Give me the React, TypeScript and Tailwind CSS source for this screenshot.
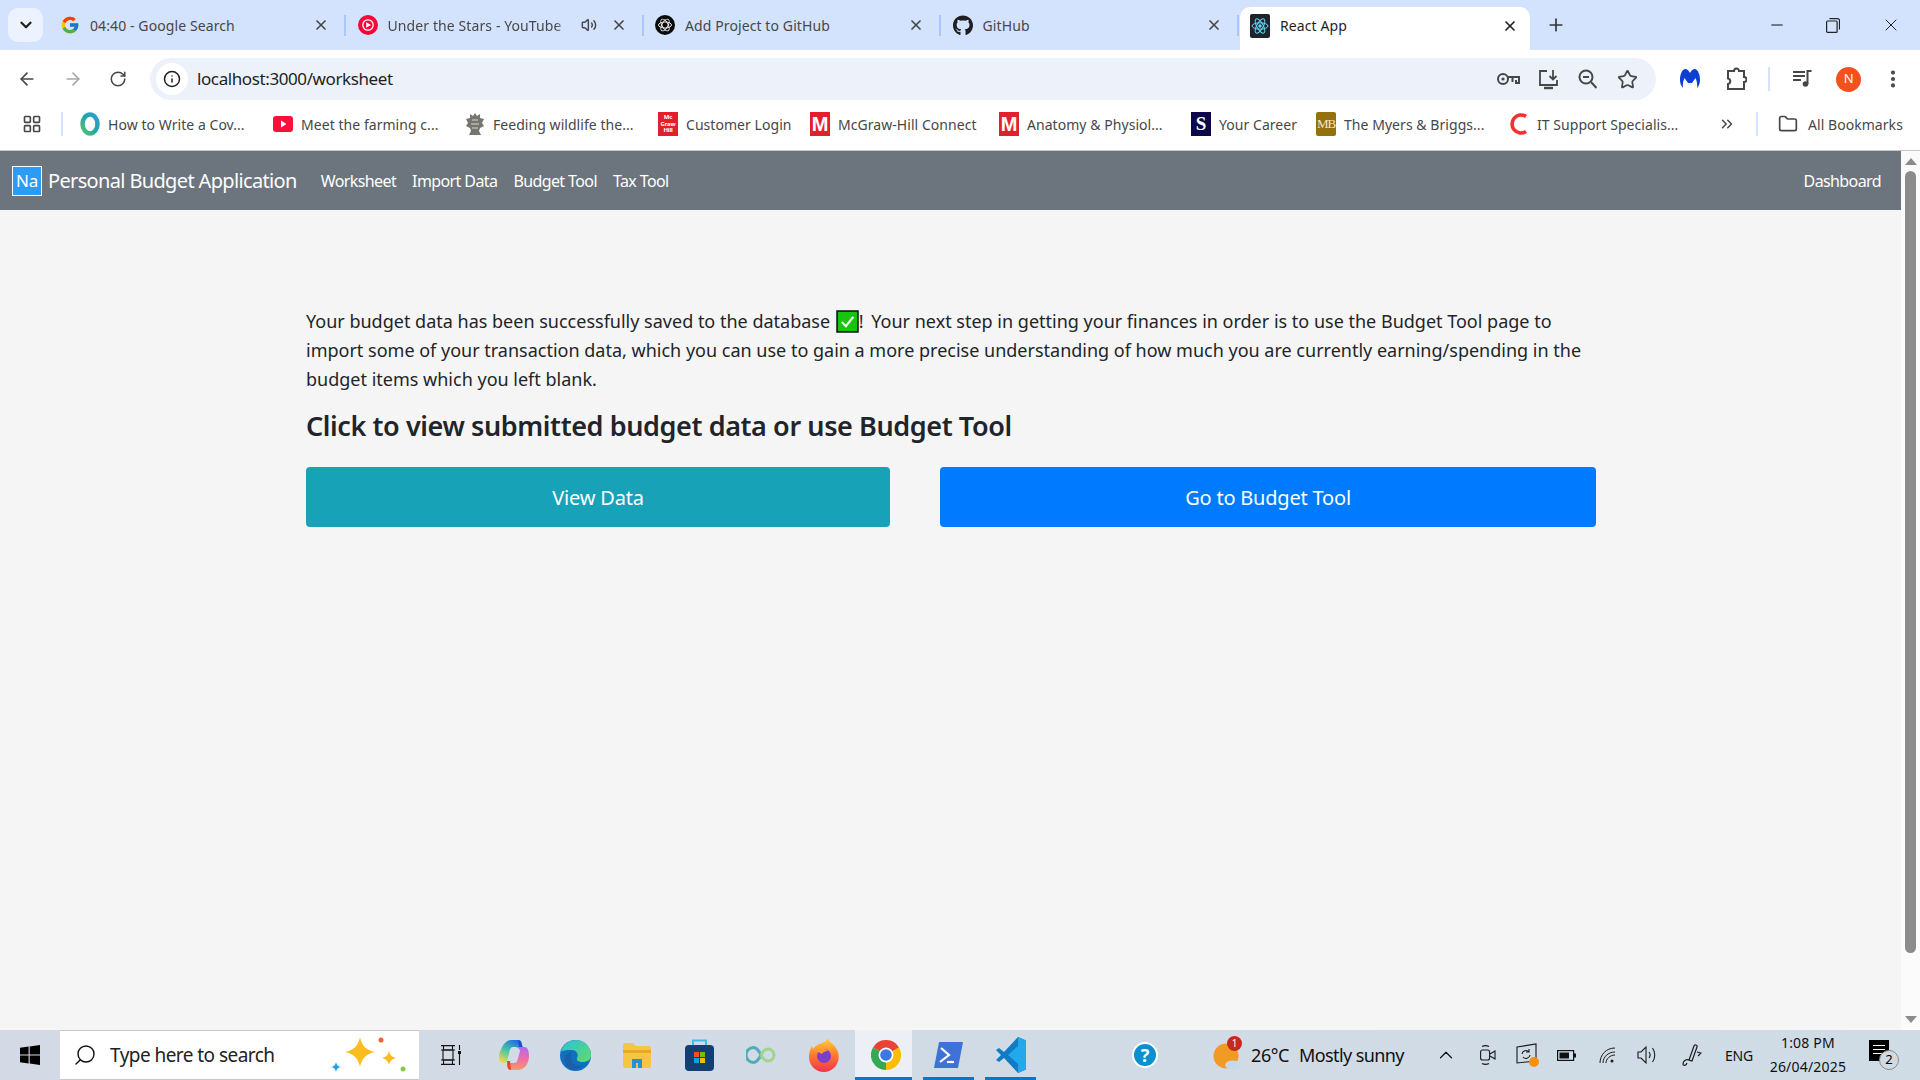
import {
  ArrowLeft,
  ArrowRight,
  ChevronDown,
  ChevronUp,
  ChevronsRight,
  EllipsisVertical,
  Folder,
  Info,
  LayoutGrid,
  Minus,
  Plus,
  RotateCw,
  Search,
  Star,
  Volume2,
  X,
} from "lucide-react";
import type { ReactNode } from "react";
import { FaGithub } from "react-icons/fa";
import { FcGoogle } from "react-icons/fc";

const YtMusicIcon = () => (
  <svg width="20" height="20" viewBox="0 0 20 20">
    <circle cx="10" cy="10" r="10" fill="#f5073a" />
    <circle cx="10" cy="10" r="5.2" fill="none" stroke="#fff" strokeWidth="1.3" />
    <path d="M8.2 7.3 13 10l-4.8 2.7z" fill="#fff" />
  </svg>
);

const GptIcon = () => (
  <svg width="20" height="20" viewBox="0 0 20 20">
    <circle cx="10" cy="10" r="10" fill="#0a0a0a" />
    <g fill="none" stroke="#e8e8e8" strokeWidth="1">
      <ellipse cx="10" cy="10" rx="6.5" ry="3" />
      <ellipse cx="10" cy="10" rx="6.5" ry="3" transform="rotate(60 10 10)" />
      <ellipse cx="10" cy="10" rx="6.5" ry="3" transform="rotate(120 10 10)" />
    </g>
  </svg>
);

const ReactFavicon = () => (
  <svg width="20" height="24" viewBox="0 0 20 24">
    <rect width="20" height="24" rx="2" fill="#20232a" />
    <g fill="none" stroke="#61dafb" strokeWidth="1">
      <ellipse cx="10" cy="12" rx="8" ry="3.2" />
      <ellipse cx="10" cy="12" rx="8" ry="3.2" transform="rotate(60 10 12)" />
      <ellipse cx="10" cy="12" rx="8" ry="3.2" transform="rotate(120 10 12)" />
    </g>
    <circle cx="10" cy="12" r="1.7" fill="#61dafb" />
  </svg>
);

const RingIcon = () => (
  <svg width="20" height="24" viewBox="0 0 20 24">
    <defs>
      <linearGradient id="ring" x1="0" y1="1" x2="1" y2="0">
        <stop offset="0" stopColor="#57c26f" />
        <stop offset="0.5" stopColor="#1fa6a8" />
        <stop offset="1" stopColor="#2f9fd0" />
      </linearGradient>
    </defs>
    <ellipse cx="10" cy="12" rx="7.5" ry="9.5" fill="none" stroke="url(#ring)" strokeWidth="4.5" />
  </svg>
);

const YtIcon = () => (
  <svg width="20" height="16" viewBox="0 0 20 16">
    <rect width="20" height="16" rx="3" fill="#fb0f3c" />
    <path d="M8 4.6 13.4 8 8 11.4z" fill="#fff" />
  </svg>
);

const CrestIcon = () => (
  <svg width="20" height="24" viewBox="0 0 20 24">
    <path d="M10 1l2 3 3-2v4l4 1-2 4 2 3-4 2-1 3 2 4H4l2-4-1-3-4-2 2-3-2-4 4-1V2l3 2z" fill="#77756f" />
    <path d="M7 8h6M6 12h8M7 16h6" stroke="#d8d8d8" strokeWidth="1" />
  </svg>
);

const McGrawIcon = () => (
  <div className="flex h-[24px] w-[20px] flex-col items-center justify-center bg-[#e2202c] text-[6px] font-bold leading-[6.5px] text-white">
    <span>Mc</span>
    <span>Graw</span>
    <span>Hill</span>
  </div>
);

const RedM = () => (
  <div className="flex h-[24px] w-[20px] items-center justify-center bg-[#e2202c] font-['Liberation_Sans',sans-serif] text-[20px] font-bold text-white">
    M
  </div>
);

const CareerIcon = () => (
  <div className="flex h-[24px] w-[20px] items-center justify-center bg-[#0c0748] font-['Liberation_Serif',serif] text-[19px] font-bold text-white">
    S
  </div>
);

const MbIcon = () => (
  <div className="flex h-[24px] w-[20px] items-center justify-center rounded-[2px] bg-[#94700f] font-['Liberation_Serif',serif] text-[13px] tracking-[-1px] text-[#f4e8c4]">
    MB
  </div>
);

const RedC = () => (
  <svg width="20" height="24" viewBox="0 0 20 24">
    <path d="M17 4.5A9 9 0 1 0 17 19.5" fill="none" stroke="#f23030" strokeWidth="3.6" />
  </svg>
);

const MalwareIcon = () => (
  <svg width="22" height="24" viewBox="0 0 22 24">
    <path
      d="M1 13C1 7 3 3 6 2c2-.6 4 2 5 4 1-2 3-4.6 5-4 3 1 5 5 5 11 0 3-1 6-3 8 .5-3 0-7-1.5-10L13 16h-4L5.5 11C4 14 3.500 18 4 21c-2-2-3-5-3-8z"
      fill="#0d3fd1"
    />
  </svg>
);

const KeyIcon = () => (
  <svg width="23" height="14" viewBox="0 0 23 14" fill="none" stroke="#474747" strokeWidth="2">
    <circle cx="6" cy="7" r="5" />
    <circle cx="6" cy="7" r="1.6" fill="#474747" stroke="none" />
    <path d="M11 5h11v6h-3V8M15.500 5v5" />
  </svg>
);

const InstallIcon = () => (
  <svg width="21" height="21" viewBox="0 0 21 21" fill="none" stroke="#474747" strokeWidth="1.800">
    <path d="M9 2H2v14h17V11" />
    <path d="M15 1v9M11.500 7l3.500 3.500L18.500 7" />
    <path d="M6 19h9" strokeWidth="2.400" />
  </svg>
);

const ZoomOutIcon = () => (
  <svg width="19" height="20" viewBox="0 0 19 20" fill="none" stroke="#474747" strokeWidth="2">
    <circle cx="8" cy="8" r="6.500" />
    <path d="M5 8h6M13 13l5.500 6" />
  </svg>
);

const PuzzleIcon = () => (
  <svg width="21" height="24" viewBox="0 0 21 24" fill="none" stroke="#474747" strokeWidth="2">
    <path d="M8 4a2.500 2.500 0 0 1 5 0h5v6a2.500 2.500 0 0 1 0 5v7H2v-5a2.800 2.800 0 0 0 0-5.500V4z" />
  </svg>
);

const MediaIcon = () => (
  <svg width="20" height="18" viewBox="0 0 20 18" fill="none" stroke="#474747" strokeWidth="1.800">
    <path d="M0 2h12M0 6h12M0 10h8" />
    <path d="M14.500 14V1h4" strokeWidth="2" />
    <circle cx="12.500" cy="14" r="2.800" fill="#474747" stroke="none" />
  </svg>
);

const RestoreIcon = () => (
  <svg width="14" height="15" viewBox="0 0 14 15" fill="none" stroke="#222" strokeWidth="1.200">
    <rect x=".6" y="3" width="10.500" height="11.400" rx="1" />
    <path d="M3.500 .6h8a2 2 0 0 1 2 2v9" />
  </svg>
);

const WinLogo = () => (
  <svg width="20" height="20" viewBox="0 0 20 20" fill="#000">
    <path d="M0 2.800 8.600 1.600v7.800H0zM9.700 1.400 20 0v9.400H9.700zM0 10.500h8.600v7.900L0 17.200zM9.700 10.500H20V20L9.700 18.600z" />
  </svg>
);

const Sparkles = () => (
  <svg width="76" height="36" viewBox="0 0 76 36">
    <path d="M29 0c2 9 6 13 15 15-9 2-13 6-15 15-2-9-6-13-15-15 9-2 13-6 15-15z" fill="#fbbc1e" />
    <path d="M58 14c1 4 3 6 7 7-4 1-6 3-7 7-1-4-3-6-7-7 4-1 6-3 7-7z" fill="#fbbc1e" />
    <circle cx="50" cy="3" r="2.500" fill="#ee6234" />
    <circle cx="72" cy="32" r="2.500" fill="#8cc84b" />
    <path d="M5 25c.6 3 2 4.400 5 5-3 .6-4.400 2-5 5-.6-3-2-4.400-5-5 3-.6 4.400-2 5-5z" fill="#1f9fe6" />
  </svg>
);

const TaskView = () => (
  <svg width="20" height="20" viewBox="0 0 20 20" fill="none" stroke="#111" strokeWidth="1.100">
    <path d="M0 .6h14M0 19.400h14M2.500 .6v4M11.500 .6v4M2.500 15.500v4M11.500 15.500v4" />
    <rect x="2" y="5" width="10" height="10" />
    <path d="M0 5h14M0 15h14" />
    <path d="M18.500 0v5M18.500 9v11" />
    <rect x="17" y="6" width="3" height="3" fill="#111" stroke="none" />
  </svg>
);

const CopilotIcon = () => (
  <svg width="30" height="30" viewBox="0 0 30 30">
    <defs>
      <linearGradient id="cpa" x1="0.700" y1="0" x2="0.200" y2="1">
        <stop offset="0" stopColor="#1f6fe0" />
        <stop offset="0.500" stopColor="#45c5a5" />
        <stop offset="1" stopColor="#f7d84a" />
      </linearGradient>
      <linearGradient id="cpb" x1="0.500" y1="0" x2="0.500" y2="1">
        <stop offset="0" stopColor="#b06be8" />
        <stop offset="0.500" stopColor="#ec6bb0" />
        <stop offset="1" stopColor="#f79a5c" />
      </linearGradient>
    </defs>
    <path d="M12 0h7c2 0 3 1 3.500 3l1 4H14c-2 0-3 2-3.500 4L8 21c-.5 1.500-1.500 2-3 2-3 0-5-2-5-5C0 10 6 0 12 0z" fill="url(#cpa)" />
    <path d="M15 7h11c2 0 4 3 4 9 0 8-5 14-11 14h-7c-2 0-3-1-3.500-3l-.5-4h7c2 0 3-1 3.500-3L21 11c-.3-2-2-4-6-4z" fill="url(#cpb)" />
    <path d="M19 0c2 0 3 1 3.500 3l1 4H20z" fill="#1c4fd0" />
    <path d="M8 21l3 0 1 9c-2 0-3-1-3.500-3z" fill="#e0452c" />
  </svg>
);

const EdgeIcon = () => (
  <svg width="31" height="31" viewBox="0 0 31 31">
    <defs>
      <linearGradient id="edgea" x1="0" y1="0" x2="1" y2="1">
        <stop offset="0" stopColor="#2cc0d8" />
        <stop offset="1" stopColor="#5fdc6a" />
      </linearGradient>
    </defs>
    <circle cx="15.500" cy="15.500" r="15.500" fill="#0f6fc0" />
    <path d="M1 12C3 4 9 0 16 0c8 0 15 6 15 15 0 5-4 7-8 7-5 0-7-2-6-4 2-3 0-8-5-8-3 0-9 0-11 2z" fill="url(#edgea)" />
    <path d="M11 18c0 5 5 9 11 8-3 3-6 4-9 4C8 29 4 24 5 18c1-4 4-6 7-6-1 2-1 4-1 6z" fill="#1a5fa8" />
  </svg>
);

const FolderApp = () => (
  <svg width="28" height="26" viewBox="0 0 28 26">
    <path d="M0 3a2 2 0 0 1 2-2h8l3 3h13a2 2 0 0 1 2 2v18a2 2 0 0 1-2 2H2a2 2 0 0 1-2-2z" fill="#f7c544" />
    <path d="M0 8h28v3H0z" fill="#e6a91f" />
    <path d="M9 26V17h10v9h-4v-5h-2v5z" fill="#2a8fd8" />
  </svg>
);

const StoreIcon = () => (
  <svg width="29" height="32" viewBox="0 0 29 32">
    <path d="M8 6V1.500h13V6" fill="none" stroke="#35c4e8" strokeWidth="2" />
    <rect y="6" width="29" height="26" rx="4" fill="#143f72" />
    <rect x="9" y="13" width="5" height="5" fill="#f25022" />
    <rect x="15" y="13" width="5" height="5" fill="#7fba00" />
    <rect x="9" y="19" width="5" height="5" fill="#00a4ef" />
    <rect x="15" y="19" width="5" height="5" fill="#ffb900" />
  </svg>
);

const InfinityIcon = () => (
  <svg width="30" height="18" viewBox="0 0 30 18" fill="none" strokeWidth="3">
    <path d="M15 9c-2-4-4-7.500-7.500-7.500a7.500 7.500 0 0 0 0 15C11 16.500 13 13 15 9" stroke="#52adb8" />
    <path d="M15 9c2-4 4-6 7-6a6 6 0 0 1 0 12c-3 0-5-2-7-6" stroke="#9ed68b" />
  </svg>
);

const FirefoxIcon = () => (
  <svg width="30" height="34" viewBox="0 0 30 34">
    <defs>
      <linearGradient id="ffa" x1="0.500" y1="0" x2="0.500" y2="1">
        <stop offset="0" stopColor="#ffd23a" />
        <stop offset="0.500" stopColor="#ff7a2e" />
        <stop offset="1" stopColor="#f0344f" />
      </linearGradient>
    </defs>
    <path d="M18 0c1 3 8 6 11 14 3 10-4 20-14 20C6 34 0 27 0 19c0-4 1-8 3-11l1 3c2-3 5-5 9-6 3-1 5-3 5-5z" fill="url(#ffa)" />
    <circle cx="15" cy="18" r="7" fill="#7b3fc9" />
    <path d="M7 13c4-3 9-3 12 0-3 0-5 1-6 3z" fill="#ff9a2e" />
  </svg>
);

const ChromeIcon = () => (
  <svg width="30" height="30" viewBox="0 0 30 30">
    <path d="M15 15 2 7.500A15 15 0 0 1 28 7.500z" fill="#ea4335" />
    <path d="M15 15 28 7.500A15 15 0 0 1 15 30z" fill="#fbbc05" />
    <path d="M15 15 15 30A15 15 0 0 1 2 7.500z" fill="#34a853" />
    <circle cx="15" cy="15" r="7.500" fill="#fff" />
    <circle cx="15" cy="15" r="5.800" fill="#3b78e7" />
  </svg>
);

const PowerShellIcon = () => (
  <svg width="29" height="26" viewBox="0 0 29 26">
    <path d="M5 0h24l-5 26H0z" fill="#3f72d8" />
    <path d="M7 6l8 7-9 7" fill="none" stroke="#fff" strokeWidth="2.200" />
    <path d="M13 20h7" stroke="#fff" strokeWidth="2.200" />
  </svg>
);

const VsCodeIcon = () => (
  <svg width="30" height="36" viewBox="0 0 30 36">
    <path d="M22 0l8 3.500v29L22 36 8 21 3 25 0 23l5-5-5-5 3-2 5 4z" fill="#0f7cc4" />
    <path d="M22 0l8 3.500v29L22 36zM22 9 12 18l10 9z" fill="#23a8ec" fillRule="evenodd" />
  </svg>
);

const HelpIcon = () => (
  <div className="flex h-[26px] w-[26px] items-center justify-center rounded-full border-[2px] border-white bg-[#0a8fd0] text-[18px] font-bold text-white">
    ?
  </div>
);

const WeatherIcon = () => (
  <div className="relative h-[30px] w-[28px]">
    <svg width="28" height="30" viewBox="0 0 28 30">
      <circle cx="13" cy="16" r="12.500" fill="#f29b24" />
      <ellipse cx="20" cy="25" rx="8" ry="4.500" fill="#c8d8ea" />
    </svg>
    <span className="absolute -top-[4px] right-[-1px] flex h-[15px] w-[15px] items-center justify-center rounded-full bg-[#c42b1c] text-[10px] text-white">
      1
    </span>
  </div>
);

const MeetIcon = () => (
  <svg width="16" height="22" viewBox="0 0 16 22" fill="none" stroke="#1a1a1a" strokeWidth="1.100">
    <rect x=".6" y="6" width="9" height="10" rx="2" />
    <path d="M10 10l5-3v8l-5-3M2 2.500c2-1 5-1 7 0M2 19.500c2 1 5 1 7 0" />
  </svg>
);

const SyncIcon = () => (
  <div className="relative h-[24px] w-[23px]">
    <svg width="21" height="21" viewBox="0 0 21 21" fill="none" stroke="#1a1a1a" strokeWidth="1.100">
      <path d="M1 4 20 1v17l-19 2zM6 11a4 4 0 0 1 7-2M13 6v3h-3M14 12a4 4 0 0 1-7 2" />
    </svg>
    <span className="absolute bottom-0 right-0 h-[10px] w-[10px] rounded-full bg-[#f7900a]" />
  </div>
);

const BatteryIcon = () => (
  <svg width="19" height="11" viewBox="0 0 19 11">
    <rect x=".6" y=".6" width="16" height="9.800" fill="none" stroke="#111" strokeWidth="1.200" />
    <rect x="2.500" y="2.500" width="9.500" height="6" fill="#111" />
    <rect x="17" y="3.500" width="2" height="4" fill="#111" />
  </svg>
);

const WifiIcon = () => (
  <svg width="17" height="17" viewBox="0 0 17 17" fill="none" stroke="#1a1a1a" strokeWidth="1">
    <path d="M1 16C1 8 7 1 16 1M4 16c0-6 5-11 12-11M7 16c0-4 4-8 9-8" />
    <circle cx="13" cy="14" r="1.500" fill="#1a1a1a" stroke="none" />
  </svg>
);

const SpeakerIcon = () => (
  <svg width="20" height="20" viewBox="0 0 20 20" fill="none" stroke="#1a1a1a" strokeWidth="1.100">
    <path d="M1 7h3l5-5v16l-5-5H1z" />
    <path d="M12 7c1.500 2 1.500 4 0 6M15.500 3c3 4 3 10 0 14" />
  </svg>
);

const PenIcon = () => (
  <svg width="20" height="24" viewBox="0 0 20 24" fill="none" stroke="#1a1a1a" strokeWidth="1.200">
    <path d="M12 3 7 17l3 1 5-14a1.500 1.500 0 0 0-3-1zM15 9l4 1-3 3M7 17c-3-1-6 1-6 4 0 2 3 2 4-1" />
  </svg>
);

const NotifIcon = () => (
  <div className="relative h-[30px] w-[30px]">
    <div className="flex h-[21px] w-[20px] flex-col gap-[3px] bg-black px-[4px] pt-[5px]">
      <div className="h-[1px] bg-white" />
      <div className="h-[1px] bg-white" />
      <div className="h-[1px] bg-white" />
    </div>
    <span className="absolute bottom-0 right-0 flex h-[20px] w-[20px] items-center justify-center rounded-full border border-[#8a8a8a] bg-[#d0dbe5] text-[13px] text-black">
      2
    </span>
  </div>
);

const TabStrip = ({
  icon,
  title,
  audio,
}: {
  icon: ReactNode;
  title: string;
  audio?: boolean;
}) => (
  <div className="flex h-[40px] w-[297.5px] shrink-0 items-center pl-[10px]">
    <div className="flex w-[20px] shrink-0 justify-center">{icon}</div>
    <span
      className={`ml-[10px] min-w-0 flex-1 overflow-hidden whitespace-nowrap text-[14px] tracking-[0.1px] text-[#474747] ${
        audio ? "[mask-image:linear-gradient(to_right,black_94%,transparent)]" : ""
      }`}
    >
      {title}
    </span>
    {audio && <Volume2 size={16} strokeWidth={2.200} className="mx-[14px] shrink-0 text-[#474747]" />}
    <X size={16} strokeWidth={2.500} className="shrink-0 text-[#474747]" />
    <div className="ml-[15px] mr-[1.500px] h-[21px] w-[2px] shrink-0 bg-[#a8c7fa]" />
  </div>
);

const bookmarks: { icon: ReactNode; label: string; width: string }[] = [
  { icon: <RingIcon />, label: "How to Write a Cov...", width: "w-[193px]" },
  { icon: <YtIcon />, label: "Meet the farming c...", width: "w-[192px]" },
  { icon: <CrestIcon />, label: "Feeding wildlife the...", width: "w-[193px]" },
  { icon: <McGrawIcon />, label: "Customer Login", width: "w-[152px]" },
  { icon: <RedM />, label: "McGraw-Hill Connect", width: "w-[189px]" },
  { icon: <RedM />, label: "Anatomy & Physiol...", width: "w-[192px]" },
  { icon: <CareerIcon />, label: "Your Career", width: "w-[125px]" },
  { icon: <MbIcon />, label: "The Myers & Briggs...", width: "w-[193px]" },
  { icon: <RedC />, label: "IT Support Specialis...", width: "w-[190px]" },
];

const BookmarkItem = ({ icon, label, width }: { icon: ReactNode; label: string; width: string }) => (
  <div className={`flex items-center ${width} shrink-0 gap-[8px]`}>
    <div className="flex w-[20px] shrink-0 justify-center">{icon}</div>
    <span className="whitespace-nowrap text-[14px] tracking-[0.05px] text-[#474747]">{label}</span>
  </div>
);

const TaskApp = ({ children, width }: { children: ReactNode; width: string }) => (
  <div className={`flex h-full items-center justify-center ${width} shrink-0`}>{children}</div>
);

export default function App() {
  return (
    <div className="flex h-[1080px] w-[1920px] flex-col overflow-hidden bg-white font-['Noto_Sans',sans-serif] tracking-[-0.2px]">
      {/* tab strip */}
      <div className="flex h-[50px] shrink-0 items-end bg-[#d3e3fd]">
        <div className="mb-[8px] ml-[8px] mr-[7px] flex h-[34px] w-[35px] shrink-0 items-center justify-center rounded-[10px] bg-[#edf3fe]">
          <ChevronDown size={18} strokeWidth={3} className="text-[#1f1f1f]" />
        </div>
        <div className="flex h-full items-center">
          <TabStrip icon={<FcGoogle size={20} />} title="04:40 - Google Search" />
          <TabStrip icon={<YtMusicIcon />} title="Under the Stars - YouTube Music" audio />
          <TabStrip icon={<GptIcon />} title="Add Project to GitHub" />
          <TabStrip icon={<FaGithub size={21} className="text-[#1f1f1f]" />} title="GitHub" />
        </div>
        <div className="flex h-[43px] w-[290px] shrink-0 items-center rounded-t-[10px] bg-white pb-[6px] pl-[10px] pr-[12px]">
          <ReactFavicon />
          <span className="ml-[10px] flex-1 text-[14px] tracking-[0.1px] text-[#1f1f1f]">React App</span>
          <X size={16} strokeWidth={2.500} className="text-[#1f1f1f]" />
        </div>
        <div className="flex h-full flex-1 items-center">
          <Plus size={20} strokeWidth={2} className="ml-[16px] text-[#333]" />
          <Minus size={18} strokeWidth={1.500} className="ml-[202px] text-[#111]" />
          <div className="ml-[40px]">
            <RestoreIcon />
          </div>
          <X size={20} strokeWidth={1.200} className="ml-[41px] text-[#222]" />
        </div>
      </div>

      {/* address bar */}
      <div className="flex h-[50px] shrink-0 items-start bg-white pt-[8px]">
        <div className="flex h-[42px] items-center pl-[17px]">
          <ArrowLeft size={20} strokeWidth={2} className="text-[#474747]" />
          <ArrowRight size={20} strokeWidth={2} className="ml-[26px] text-[#a8a8a8]" />
          <RotateCw size={18} strokeWidth={2} className="ml-[26px] text-[#474747]" />
        </div>
        <div className="ml-[23px] flex h-[42px] w-[1506px] shrink-0 items-center rounded-full bg-[#ecf1fa] pl-[6px]">
          <div className="flex h-[32px] w-[32px] items-center justify-center rounded-full bg-white">
            <Info size={18} strokeWidth={2} className="text-[#1f1f1f]" />
          </div>
          <span className="ml-[9px] flex-1 text-[17px] tracking-[-0.4px] text-[#1f1f1f]">localhost:3000/worksheet</span>
          <KeyIcon />
          <div className="ml-[18px]">
            <InstallIcon />
          </div>
          <div className="ml-[19px]">
            <ZoomOutIcon />
          </div>
          <Star size={21} strokeWidth={2} className="ml-[20px] mr-[18px] text-[#474747]" />
        </div>
        <div className="flex h-[42px] items-center">
          <div className="ml-[23px]">
            <MalwareIcon />
          </div>
          <div className="ml-[25px]">
            <PuzzleIcon />
          </div>
          <div className="ml-[21px] h-[24px] w-[2px] bg-[#d3e3fd]" />
          <div className="ml-[23px]">
            <MediaIcon />
          </div>
          <div className="ml-[23px] flex h-[25px] w-[25px] items-center justify-center rounded-full bg-[#f4511e] text-[13px] text-white">
            N
          </div>
          <EllipsisVertical size={22} strokeWidth={2.500} className="ml-[21px] text-[#474747]" />
        </div>
      </div>

      {/* bookmarks */}
      <div className="flex h-[51px] shrink-0 items-center border-b border-[#c7c7c7] bg-white pb-[2px]">
        <LayoutGrid size={20} strokeWidth={2} className="ml-[22px] text-[#474747]" />
        <div className="ml-[19px] mr-[17px] h-[24px] w-[2px] bg-[#d3e3fd]" />
        {bookmarks.map((b) => (
          <BookmarkItem key={b.label} icon={b.icon} label={b.label} width={b.width} />
        ))}
        <ChevronsRight size={18} strokeWidth={2} className="ml-[19px] text-[#474747]" />
        <div className="ml-[20px] mr-[20px] h-[24px] w-[2px] bg-[#d3e3fd]" />
        <Folder size={20} strokeWidth={2} className="text-[#474747]" />
        <span className="ml-[10px] whitespace-nowrap text-[14px] tracking-[0.05px] text-[#474747]">All Bookmarks</span>
      </div>

      {/* page */}
      <div className="flex min-h-0 flex-1">
        <div className="flex min-w-0 flex-1 flex-col bg-[#f5f5f5]">
          <nav className="flex h-[59px] shrink-0 items-center bg-[#6c757d] pl-[12px] pr-[20px] text-white">
            <div className="flex h-[30px] w-[30px] shrink-0 items-center justify-center border border-white bg-[#2b9cf5] text-[17px] leading-none">
              Na
            </div>
            <span className="ml-[6px] text-[20px] tracking-[-0.65px]">Personal Budget Application</span>
            <div className="ml-[24px] flex gap-[16px] text-[16px] tracking-[-0.6px]">
              <span>Worksheet</span>
              <span>Import Data</span>
              <span>Budget Tool</span>
              <span>Tax Tool</span>
            </div>
            <span className="ml-auto text-[16px] tracking-[-0.6px]">Dashboard</span>
          </nav>
          <main className="ml-[306px] w-[1290px] pt-[97px] text-[#212529]">
            <p className="whitespace-nowrap text-[18px] leading-[29px] tracking-normal">
              Your budget data has been successfully saved to the database{" "}
              <svg width="23" height="23" viewBox="0 0 22 22" className="ml-[1px] inline-block align-[-5px]">
                <rect x="1" y="1" width="20" height="20" fill="#16c60c" stroke="#111" strokeWidth="1.500" />
                <path d="M5.500 11.500 9.500 15.500 16.500 6.500" fill="none" stroke="#fff" strokeWidth="2" />
              </svg>
              <span className="mr-[3px]">!</span> Your next step in getting your finances in order is to use the Budget Tool page to
              <br />
              import some of your transaction data, which you can use to gain a more precise understanding of how much you are currently earning/spending in the
              <br />
              budget items which you left blank.
            </p>
            <h4 className="mt-[15px] whitespace-nowrap text-[27px] font-semibold leading-[34px] tracking-[-0.4px]">
              Click to view submitted budget data or use Budget Tool
            </h4>
            <div className="mt-[24px] flex gap-[50px]">
              <button className="flex h-[60px] w-[584px] items-center justify-center rounded-[4px] bg-[#17a2b8] pt-[1px] text-[20px] text-white">
                View Data
              </button>
              <button className="flex h-[60px] w-[656px] items-center justify-center rounded-[4px] bg-[#007bff] pt-[1px] text-[20px] text-white">
                Go to Budget Tool
              </button>
            </div>
          </main>
        </div>
        <div className="flex w-[19px] shrink-0 flex-col items-center bg-[#fbfbfb] pb-[7px] pt-[7px]">
          <div className="h-0 w-0 border-x-[6px] border-b-[7px] border-x-transparent border-b-[#8b8b8b]" />
          <div className="mt-[6px] h-[782px] w-[11px] rounded-full bg-[#8b8b8b]" />
          <div className="mt-auto h-0 w-0 border-x-[6px] border-t-[7px] border-x-transparent border-t-[#8b8b8b]" />
        </div>
      </div>

      {/* windows taskbar */}
      <div className="flex h-[50px] shrink-0 items-center bg-gradient-to-r from-[#d3dae6] to-[#cfdce6] text-[#111]">
        <TaskApp width="w-[60px]">
          <WinLogo />
        </TaskApp>
        <div className="flex h-full w-[359px] shrink-0 items-center border-y border-[#c9c9c9] bg-white pl-[13px]">
          <Search size={24} strokeWidth={1.400} className="-scale-x-100 text-[#111]" />
          <span className="ml-[13px] flex-1 text-[19px] tracking-[-0.55px] text-[#222]">Type here to search</span>
          <div className="mr-[12px]">
            <Sparkles />
          </div>
        </div>
        <TaskApp width="w-[63px]">
          <TaskView />
        </TaskApp>
        <TaskApp width="w-[63px]">
          <CopilotIcon />
        </TaskApp>
        <TaskApp width="w-[61px]">
          <EdgeIcon />
        </TaskApp>
        <TaskApp width="w-[62px]">
          <FolderApp />
        </TaskApp>
        <TaskApp width="w-[62px]">
          <StoreIcon />
        </TaskApp>
        <TaskApp width="w-[62px]">
          <InfinityIcon />
        </TaskApp>
        <TaskApp width="w-[63px]">
          <FirefoxIcon />
        </TaskApp>
        <div className="flex h-full w-[57px] shrink-0 items-center justify-center border-b-[3px] border-[#0078d4] bg-[#ecf0f6] pl-[4px] pt-[2px]">
          <ChromeIcon />
        </div>
        <div className="ml-[11px] flex h-full w-[51px] shrink-0 items-center justify-center border-b-[3px] border-[#0078d4] pt-[2px]">
          <PowerShellIcon />
        </div>
        <div className="ml-[11px] flex h-full w-[51px] shrink-0 items-center justify-center border-b-[3px] border-[#0078d4] pt-[2px]">
          <VsCodeIcon />
        </div>
        <div className="ml-[96px]">
          <HelpIcon />
        </div>
        <div className="ml-[55px]">
          <WeatherIcon />
        </div>
        <span className="ml-[10px] whitespace-nowrap text-[18px] tracking-[-0.4px]">26°C</span>
        <span className="ml-[10px] whitespace-nowrap text-[18px] tracking-[-0.6px]">Mostly sunny</span>
        <ChevronUp size={22} strokeWidth={1.300} className="ml-[31px]" />
        <div className="ml-[23px]">
          <MeetIcon />
        </div>
        <div className="ml-[20px]">
          <SyncIcon />
        </div>
        <div className="ml-[18px]">
          <BatteryIcon />
        </div>
        <div className="ml-[23px]">
          <WifiIcon />
        </div>
        <div className="ml-[21px]">
          <SpeakerIcon />
        </div>
        <div className="ml-[25px]">
          <PenIcon />
        </div>
        <span className="ml-[23px] text-[14px]">ENG</span>
        <div className="ml-[17px] flex w-[76px] flex-col items-center whitespace-nowrap text-[14px] leading-[24px] tracking-[0.2px]">
          <span>1:08 PM</span>
          <span>26/04/2025</span>
        </div>
        <div className="ml-[23px]">
          <NotifIcon />
        </div>
      </div>
    </div>
  );
}
